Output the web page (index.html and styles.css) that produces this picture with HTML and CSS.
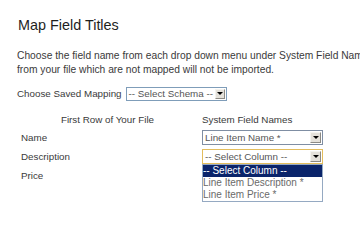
FILE: index.html
```html
<!DOCTYPE html>
<html>
<head>
<meta charset="utf-8">
<link rel="stylesheet" href="styles.css">
</head>
<body>
<div class="page">
  <h1 class="title">Map Field Titles</h1>
  <p class="intro">Choose the field name from each drop down menu under System Field Names. Fields from your file which are not mapped will not be imported.</p>
  <div class="saved">
    <span class="saved-label">Choose Saved Mapping</span>
    <div class="select schema">
      <span class="select-text">-- Select Schema --</span>
      <span class="select-btn"><span class="tri"></span></span>
    </div>
  </div>
  <div class="map">
    <div class="cell head first">First Row of Your File</div>
    <div class="cell head second">System Field Names</div>

    <div class="cell label">Name</div>
    <div class="cell field">
      <div class="select">
        <span class="select-text">Line Item Name *</span>
        <span class="select-btn"><span class="tri"></span></span>
      </div>
    </div>

    <div class="cell label">Description</div>
    <div class="cell field">
      <div class="select focused">
        <span class="select-text">-- Select Column --</span>
        <span class="select-btn"><span class="tri"></span></span>
      </div>
      <ul class="dropdown">
        <li class="opt active">-- Select Column --</li>
        <li class="opt">Line Item Description *</li>
        <li class="opt">Line Item Price *</li>
      </ul>
    </div>

    <div class="cell label">Price</div>
    <div class="cell field"></div>
  </div>
</div>
</body>
</html>
```
FILE: styles.css
```css
html, body {
  margin: 0;
  padding: 0;
  background: #ffffff;
}
html {
  overflow: hidden;
}
body {
  font-family: "Liberation Sans", Arial, sans-serif;
  color: #3a3a3a;
}
.page {
  box-sizing: border-box;
  padding: 0 0 0 17px;
  width: 420px;
  min-height: 213px;
}
.title {
  margin: 17px 0 0 1px;
  font-size: 14.4px;
  line-height: 17px;
  font-weight: normal;
  color: #1e1e1e;
}
.intro {
  margin: 15px 0 0 0;
  font-size: 10.25px;
  line-height: 13.5px;
  width: 390px;
}
.saved {
  margin-top: 10px;
  display: flex;
  align-items: center;
  height: 15px;
  gap: 4px;
  font-size: 9.8px;
}
.select {
  box-sizing: border-box;
  width: 121px;
  height: 15px;
  border: 1px solid #7f8ea3;
  background: #ffffff;
  display: flex;
  align-items: center;
  justify-content: space-between;
  font-size: 9.8px;
  color: #555555;
}
.select.schema {
  width: 101px;
  height: 14px;
  border-color: #7f9db9;
}
.select.focused {
  border-color: #e3bd5d;
}
.select-text {
  padding-left: 2px;
  white-space: nowrap;
  line-height: 12px;
}
.select-btn {
  box-sizing: border-box;
  width: 11px;
  height: 11px;
  margin-right: 1px;
  background: #e4e1da;
  border-top: 1px solid #f4f3ef;
  border-left: 1px solid #f4f3ef;
  border-right: 1px solid #8c8a84;
  border-bottom: 1px solid #8c8a84;
  display: flex;
  align-items: center;
  justify-content: center;
}
.select.schema .select-btn {
  width: 10px;
  height: 10px;
}
.tri {
  width: 0;
  height: 0;
  border-left: 3px solid transparent;
  border-right: 3px solid transparent;
  border-top: 3px solid #000000;
}
.map {
  margin-top: 10px;
  display: grid;
  grid-template-columns: 181px 140px;
  grid-template-rows: 17px 19px 19px 19px;
  font-size: 9.8px;
}
.cell {
  display: flex;
  align-items: center;
}
.head.first {
  justify-content: center;
  color: #3a3a3a;
}
.head.second,
.field {
  padding-left: 4px;
  position: relative;
}
.label {
  padding-left: 4px;
}
.dropdown {
  position: absolute;
  left: 4px;
  top: 17px;
  margin: 0;
  padding: 0;
  list-style: none;
  box-sizing: border-box;
  width: 121px;
  border: 1px solid #95a9c2;
  background: #ffffff;
  z-index: 2;
}
.opt {
  height: 12px;
  line-height: 12px;
  padding-left: 0;
  color: #6a6a6a;
  font-size: 10px;
  white-space: nowrap;
}
.opt.active {
  background: #0a246a;
  color: #ffffff;
}
```
